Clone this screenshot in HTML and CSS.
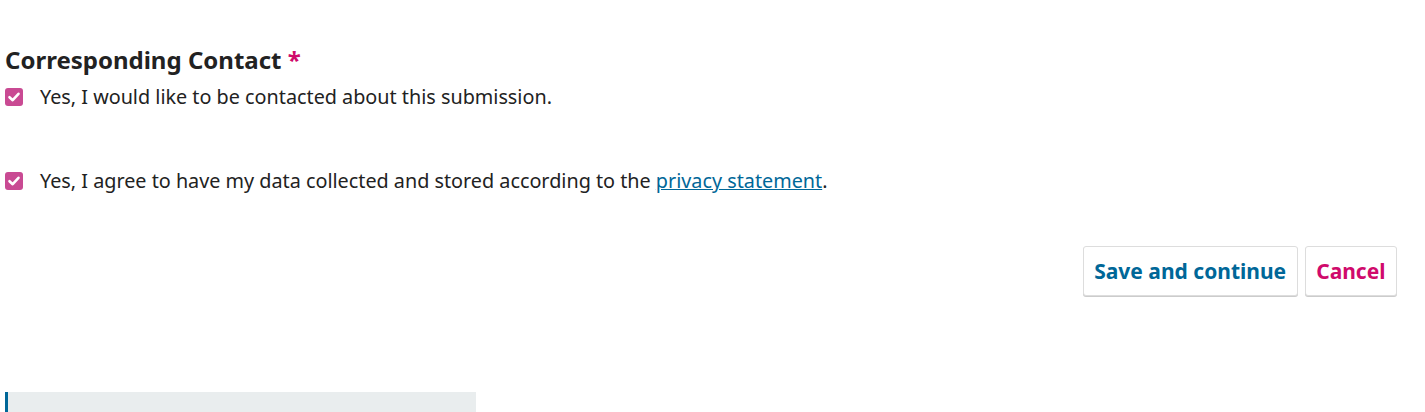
FILE: index.html
```html
<!DOCTYPE html>
<html>
<head>
<meta charset="utf-8">
<link rel="stylesheet" href="styles.css">
</head>
<body>
<div class="page">
  <fieldset class="section">
    <legend class="legend">Corresponding Contact <span class="req">*</span></legend>
    <label class="check">
      <span class="box"><svg viewBox="0 0 18 18" width="18" height="18"><path d="M4.5 9.2 L7.7 12.2 L13.5 5.8" fill="none" stroke="#fff" stroke-width="2.6" stroke-linecap="round" stroke-linejoin="round"/></svg></span>
      <span class="text">Yes, I would like to be contacted about this submission.</span>
    </label>
  </fieldset>
  <div class="section2">
    <label class="check">
      <span class="box"><svg viewBox="0 0 18 18" width="18" height="18"><path d="M4.5 9.2 L7.7 12.2 L13.5 5.8" fill="none" stroke="#fff" stroke-width="2.6" stroke-linecap="round" stroke-linejoin="round"/></svg></span>
      <span class="text">Yes, I agree to have my data collected and stored according to the <a href="#" class="link">privacy statement</a>.</span>
    </label>
  </div>
  <div class="buttons">
    <button class="btn primary">Save and continue</button>
    <button class="btn cancel">Cancel</button>
  </div>
  <div class="notice"></div>
</div>
</body>
</html>
```
FILE: styles.css
```css
html, body { margin: 0; padding: 0; background: #fff; }
body { font-family: "Noto Sans", sans-serif; color: rgba(0,0,0,0.87); }
.page { padding: 45px 28px 0 5px; }
.section { border: 0; margin: 0; padding: 0; }
.legend { padding: 0; font-size: 24px; font-weight: 700; line-height: 30px; color: #222; }
.req { color: #d00a6c; }
.check { display: flex; align-items: center; gap: 17px; font-size: 19.8px; line-height: 28px; color: #222; margin-top: 8px; }
.box { width: 18px; height: 18px; border-radius: 3px; background: #c94a93; display: flex; flex: none; }
.section2 { margin-top: 56px; }
.link { color: #006798; text-decoration: underline; }
.buttons { display: flex; justify-content: flex-end; gap: 7px; margin-top: 51px; }
.btn { font-family: "Noto Sans", sans-serif; font-weight: 700; font-size: 21px; height: 50px; padding: 0 10.5px; background: #fff; border: 1px solid #ddd; border-radius: 3px; box-shadow: 0 1px 0 #ccc; }
.primary { color: #006798; }
.cancel { color: #d00a6c; }
.notice { margin-top: 96px; width: 468px; height: 20px; background: #e9edee; border-left: 3px solid #006798; }
```
